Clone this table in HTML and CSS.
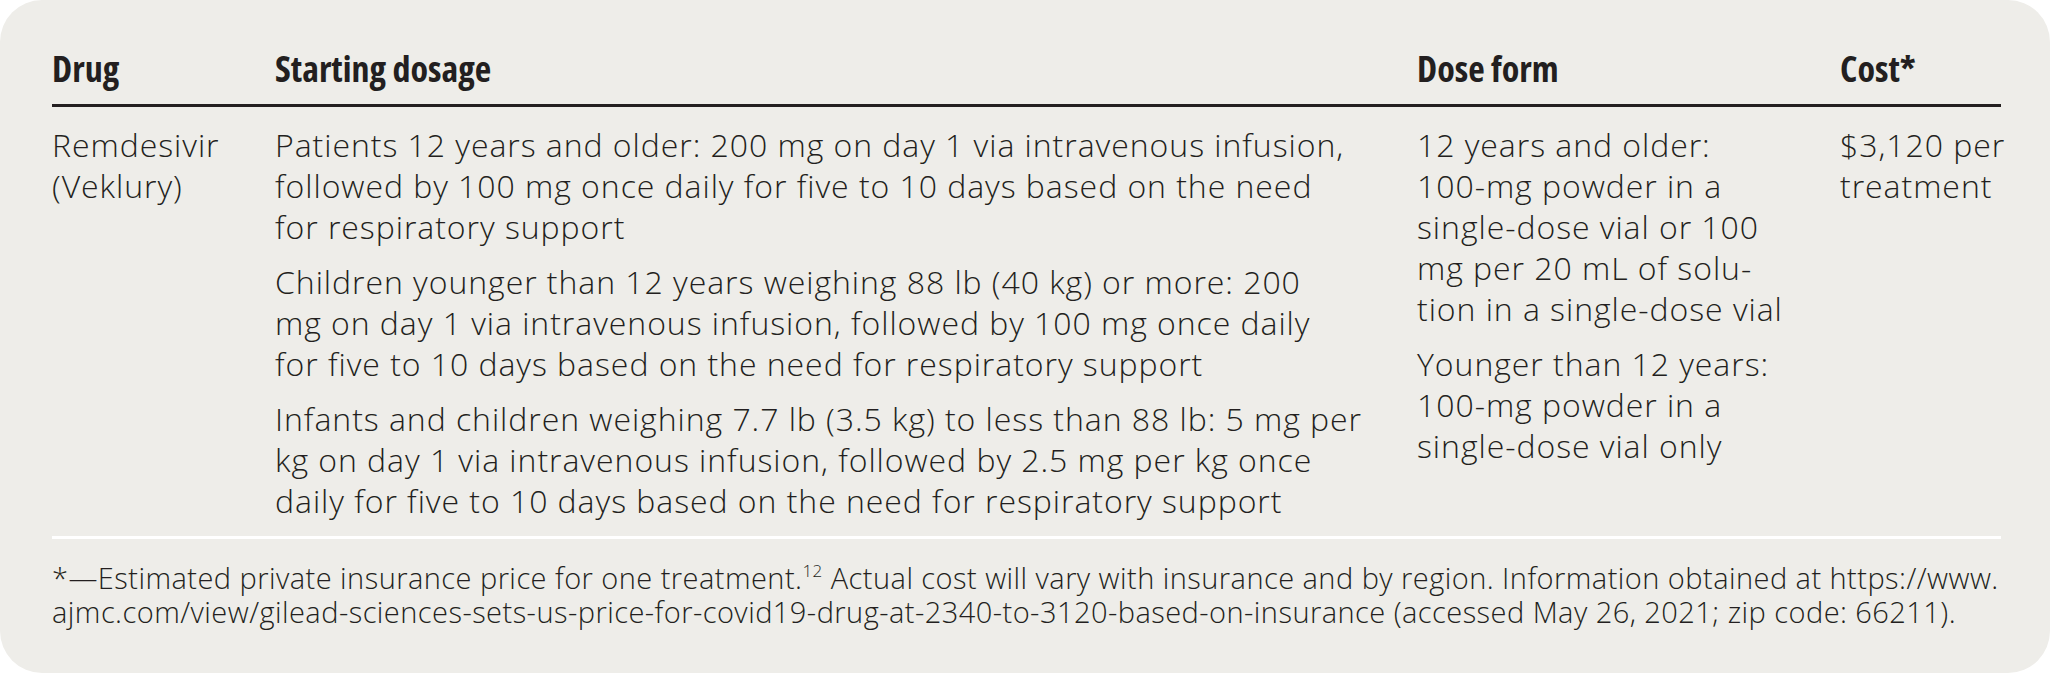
FILE: index.html
```html
<!DOCTYPE html>
<html lang="en">
<head>
<meta charset="utf-8">
<title>Remdesivir dosage</title>
<link rel="stylesheet" href="styles.css">
</head>
<body>
<div class="card">
  <div class="table">
    <div class="th">Drug</div>
    <div class="th">Starting dosage</div>
    <div class="th">Dose form</div>
    <div class="th">Cost*</div>

    <div class="td">Remdesivir<br>(Veklury)</div>
    <div class="td">
      <p>Patients 12 years and older: 200 mg on day 1 via intravenous infusion,<br>followed by 100 mg once daily for five to 10 days based on the need<br>for respiratory support</p>
      <p>Children younger than 12 years weighing 88 lb (40 kg) or more: 200<br>mg on day 1 via intravenous infusion, followed by 100 mg once daily<br>for five to 10 days based on the need for respiratory support</p>
      <p>Infants and children weighing 7.7 lb (3.5 kg) to less than 88 lb: 5 mg per<br>kg on day 1 via intravenous infusion, followed by 2.5 mg per kg once<br>daily for five to 10 days based on the need for respiratory support</p>
    </div>
    <div class="td">
      <p>12 years and older:<br>100-mg powder in a<br>single-dose vial or 100<br>mg per 20 mL of solu-<br>tion in a single-dose vial</p>
      <p>Younger than 12 years:<br>100-mg powder in a<br>single-dose vial only</p>
    </div>
    <div class="td">$3,120 per<br>treatment</div>
  </div>
  <p class="note">*—Estimated private insurance price for one treatment.<sup>12</sup> Actual cost will vary with insurance and by region. Information obtained at https://www.<br>ajmc.com/view/gilead-sciences-sets-us-price-for-covid19-drug-at-2340-to-3120-based-on-insurance (accessed May 26, 2021; zip code: 66211).</p>
</div>
</body>
</html>
```
FILE: styles.css
```css
html, body {
  margin: 0;
  padding: 0;
  background: #ffffff;
}

.card {
  box-sizing: border-box;
  width: 2050px;
  height: 673px;
  background: #eeede9;
  border-radius: 42px;
  padding: 47px 49px 0 52px;
  color: #231f20;
  font-family: "Open Sans", "Lato", sans-serif;
  font-weight: 300;
}

.table {
  display: grid;
  grid-template-columns: 223px 1142px 423px 161px;
  border-bottom: 3px solid #ffffff;
}

.th {
  font-family: "Open Sans", sans-serif;
  font-stretch: 75%;
  font-weight: 700;
  font-size: 36px;
  line-height: 44px;
  letter-spacing: 0;
  padding-bottom: 13px;
  border-bottom: 3px solid #231f20;
  white-space: nowrap;
}

.td {
  font-size: 32px;
  line-height: 41px;
  letter-spacing: 0.95px;
  padding-top: 17px;
  padding-bottom: 15px;
  white-space: nowrap;
}

.td p {
  margin: 0 0 14px 0;
}

.td p:last-child {
  margin-bottom: 0;
}

.note {
  margin: 22px 0 0 0;
  font-size: 29px;
  line-height: 34px;
  letter-spacing: 0.45px;
  white-space: nowrap;
}

.note sup {
  font-size: 17px;
  line-height: 0;
  vertical-align: 12px;
}
```
